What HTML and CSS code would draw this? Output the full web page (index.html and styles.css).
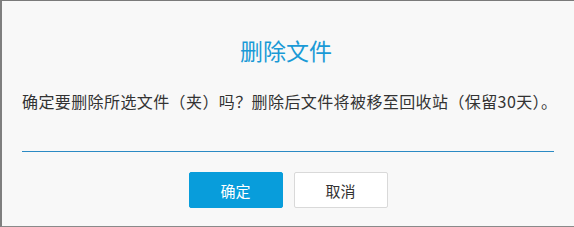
FILE: index.html
```html
<!DOCTYPE html>
<html lang="zh-CN">
<head>
    <meta charset="UTF-8">
    <meta name="viewport" content="width=device-width, initial-scale=1.0">
    <title>删除文件</title>
    <link rel="stylesheet" href="styles.css">
</head>
<body>
    <div class="dialog">
        <h1 class="title">删除文件</h1>
        <p class="message">确定要删除所选文件（夹）吗？删除后文件将被移至回收站（保留30天）。</p>
        <div class="divider"></div>
        <div class="actions">
            <button type="button" class="btn btn-primary">确定</button>
            <button type="button" class="btn btn-default">取消</button>
        </div>
    </div>
</body>
</html>
```

FILE: styles.css
```css
* {
    box-sizing: border-box;
    margin: 0;
    padding: 0;
}
html, body {
    height: 100%;
}
body {
    background-color: #f8f8f8;
    font-family: "Noto Sans CJK SC", "Noto Sans", sans-serif;
    color: #333;
    overflow: hidden;
}
.dialog {
    height: 227px;
    border-top: 1px solid #7a7a7a;
    border-left: 2px solid #7f7f7f;
    border-bottom: 1px solid #8a8a8a;
    padding: 34px 20px 0 20px;
}
.title {
    font-size: 23px;
    font-weight: normal;
    line-height: 30px;
    color: #1a9ad6;
    text-align: center;
    padding-right: 4px;
}
.message {
    margin-top: 24px;
    font-size: 16px;
    line-height: 24px;
    letter-spacing: 0.4px;
    white-space: nowrap;
}
.divider {
    margin-top: 38px;
    height: 1px;
    background-color: #2b8ac4;
}
.actions {
    display: flex;
    justify-content: center;
    gap: 11px;
    margin-top: 20px;
}
.btn {
    width: 94px;
    height: 36px;
    border-radius: 2px;
    font-family: inherit;
    font-size: 15px;
    cursor: pointer;
}
.btn-primary {
    background-color: #089ddb;
    border: 1px solid #089ddb;
    color: #fff;
}
.btn-default {
    background-color: #fff;
    border: 1px solid #d9d9d9;
    color: #333;
}
```
